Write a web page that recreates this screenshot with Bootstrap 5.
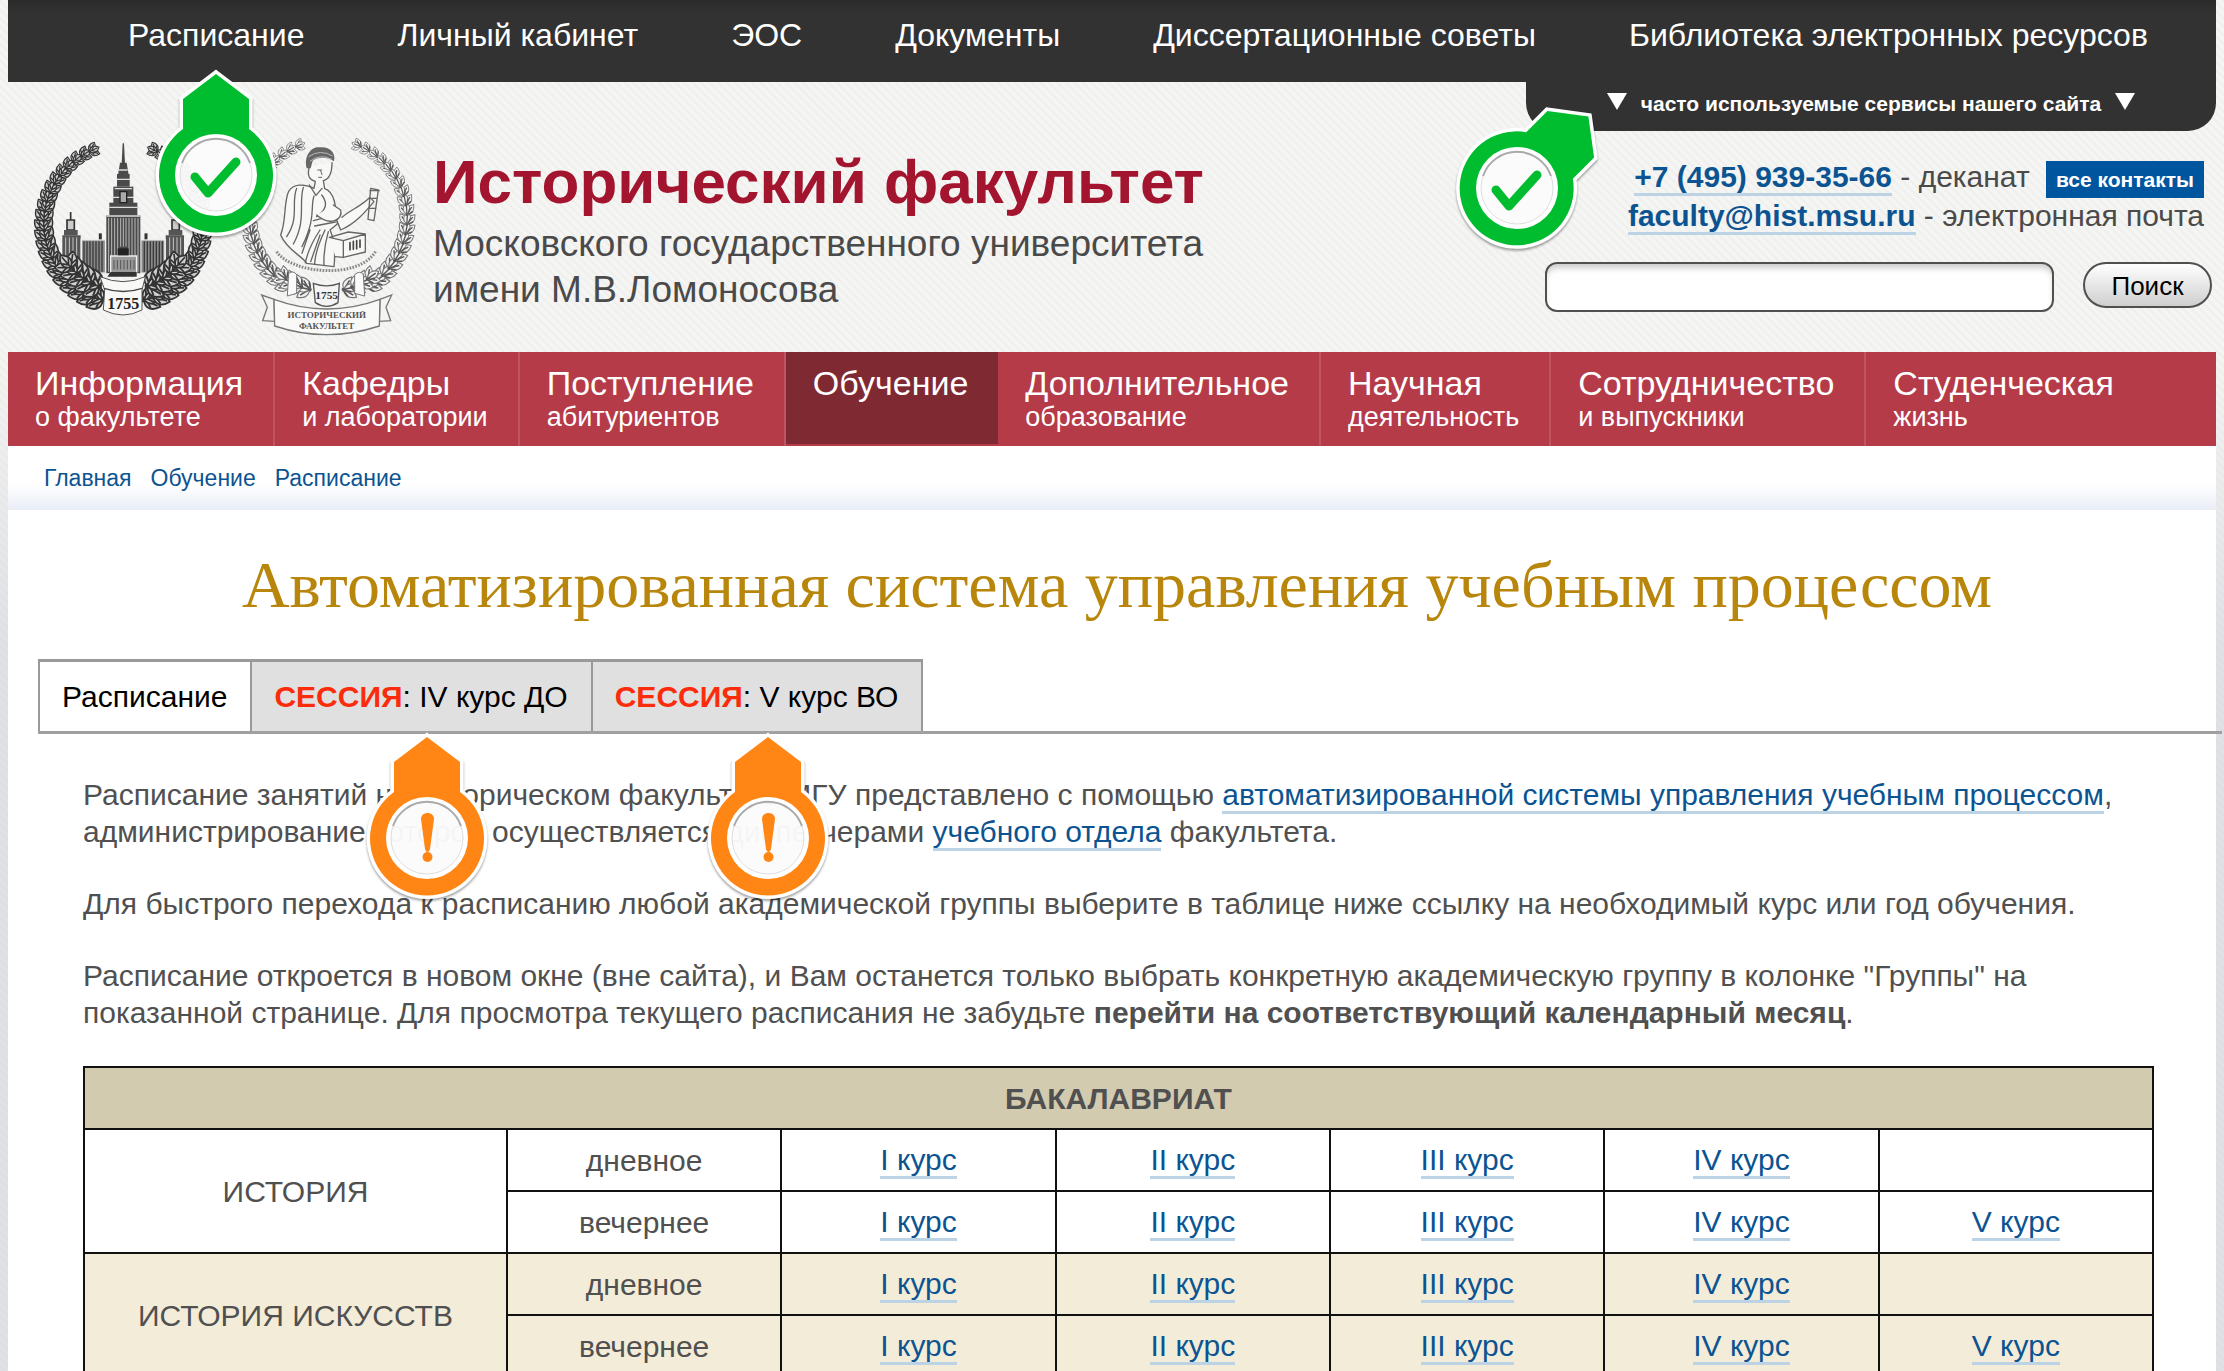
<!DOCTYPE html>
<html lang="ru">
<head>
<meta charset="utf-8">
<meta name="viewport" content="width=device-width, initial-scale=1">
<title>Исторический факультет МГУ — Расписание</title>
<link rel="stylesheet" href="https://cdn.jsdelivr.net/npm/bootstrap@5.3.0/dist/css/bootstrap.min.css">
<style>
  body { font-family: "Liberation Sans", Arial, sans-serif; font-size: 30px; line-height: 37px; color: #505050; overflow-x: hidden;
    background: linear-gradient(180deg, rgba(208,212,220,0) 350px, rgba(208,211,218,.6) 650px), repeating-linear-gradient(45deg, #eeeeec 0, #f5f5f3 2px, #f5f5f3 4px, #eeeeec 6px); }
  html { scrollbar-width: none; }
  a { color: #0c5491; text-decoration: none; }
  .sheet { margin: 0 8px; }
  .topbar { background: linear-gradient(#2b2b2b, #323232 12px); height: 82px; gap: 93px; padding: 10px 0 0 120px; }
  .topbar a { color: #fff; font-size: 32px; line-height: 50px; }
  .masthead { height: 270px; }
  .emblems { padding: 48px 0 0 24px; width: 425px; }
  .brand { padding-top: 70px; line-height: 46px; font-size: 37px; color: #4a4a4a; }
  .brand h1 { color: #a3142f; font-size: 62px; font-weight: 700; line-height: 60px; margin: 0 0 9px; }
  .aside-col { width: 690px; color: #4a4a4a; }
  .services { background: #323232; color: #fff; height: 49px; border-radius: 0 0 28px 28px; font-size: 21px; font-weight: 700; line-height: 43px; gap: 14px; }
  .services svg { width: 20px; height: 17px; fill: #fff; margin-top: 11px; }
  .contacts { padding: 26px 12px 0 0; line-height: 39px; }
  .wire { border-bottom: 3px solid #bcd3e6; }
  .contacts .wire { font-weight: 700; }
  .all-btn { background: #00559f; color: #fff; font-size: 21px; font-weight: 700; line-height: 37px; padding: 0 10px; border: 0; margin: -4px 0 -4px 8px; }
  .search { padding: 27px 4px 0 0; gap: 29px; }
  .search input { width: 509px; height: 50px; border: 2px solid #505050; border-radius: 12px; box-shadow: inset 0 6px 6px -2px #ccc; background: #fff; padding: 0 12px; font-size: 26px; }
  .search button { width: 129px; height: 46px; border: 2px solid #505050; border-radius: 23px; background: linear-gradient(#fff, #cfcfcf); font-size: 26px; line-height: 44px; padding: 0; color: #000; }
  .mainnav { background: #b53b49; height: 94px; }
  .mainnav a { color: #fff; font-size: 34px; line-height: 40px; padding: 11px 30px 0 27px; border-right: 2px solid #bf5563; }
  .mainnav a span { display: block; font-size: 27px; line-height: 28px; }
  .mainnav a.active { background: #7f2a33; border-color: #7f2a33; margin-bottom: 2px; padding-right: 28px; }
  .mainnav a:last-child { border: 0; }
  .crumbs { height: 64px; background: linear-gradient(#fff 60%, #e9edf6); padding: 14px 36px 0; font-size: 23px; gap: 19px; }
  .main-col { background: #fff; padding-bottom: 40px; }
  .main-col h2 { color: #b8860b; font-family: "Liberation Serif", serif; font-size: 66px; font-weight: 400; line-height: 70px; text-align: center; margin: 0; padding: 40px 0 0 10px; }
  .tabs { margin: 39px -6px 0 30px; border-bottom: 3px solid #a0a0a0; }
  .tabs a { border: solid #999; border-width: 3px 0 0 2px; background: #e0e0e0; color: #000; line-height: 69px; padding: 0 23px 0 22px; }
  .tabs a:last-child { border-right-width: 2px; }
  .tabs a.active { background: #fff; }
  .tabs b { color: #fb2c0b; }
  .copy { padding: 42px 62px 0 75px; }
  .copy p { margin: 0 0 35px; }
  .grid { width: 100%; table-layout: fixed; border-collapse: collapse; text-align: center; }
  .grid td, .grid th { border: 2px solid #111; height: 62px; padding: 0; vertical-align: middle; }
  .grid th { background: #d3cbaf; }
  .grid .lead-col { width: 423px; }
  .grid .tint td { background: #f3ecd9; }
  .grid td:has(a) { padding-bottom: 2px; }
  .pin { position: absolute; width: 130px; height: 180px; z-index: 5; overflow: visible; pointer-events: none; filter: drop-shadow(0 2px 1px rgba(0,0,0,.35)); }
  .pin-ok { color: #00bd2f; }
  .pin-warn { color: #ff8615; left: 110px; top: 61px; }
  .pin-nav { left: 23px; top: 50px; }
  .pin-head { left: -74px; top: -9px; }
</style>
<script src="https://cdn.jsdelivr.net/npm/bootstrap@5.3.0/dist/js/bootstrap.bundle.min.js"></script>
</head>
<body>
<svg width="0" height="0" class="position-absolute" aria-hidden="true">
  <defs>
    <g id="pinShape">
      <path fill-rule="evenodd" d="M65 14L98 39V69A57 57 0 1 1 32 69V39ZM65 76A39 39 0 1 0 65 154A39 39 0 1 0 65 76Z" fill="#fff" stroke="#fff" stroke-width="7"/>
      <path fill-rule="evenodd" d="M65 14L98 39V69A57 57 0 1 1 32 69V39ZM65 74A41 41 0 1 0 65 156A41 41 0 1 0 65 74Z" fill="currentColor"/>
      <circle cx="65" cy="115" r="37" fill="#fff" fill-opacity=".95"/>
    </g>
    <g id="pinRim"><circle cx="65" cy="115" r="36" fill="none" stroke="#ddd" stroke-width="1"/><path d="M31 103A36 36 0 0 1 99 103" fill="none" stroke="#aaa" stroke-width="2"/></g>
    <path id="tick" d="M44 117L57 133L85 102" fill="none" stroke="currentColor" stroke-width="9" stroke-linecap="round" stroke-linejoin="round"/>
    <g id="bang" fill="currentColor"><path d="M59 96C59 88 72 88 72 96L68 126C67 130 64 130 63 126Z"/><circle cx="65.500" cy="134" r="5"/></g>
    <g id="leaf"><path d="M0 0C-9-5-7-13 0-19C7-13 9-5 0 0Z" fill="#d0d0d0" stroke="#333" stroke-width="2"/><path d="M0 3V-16M0-4L5-10M0-4L-5-10" fill="none" stroke="#333" stroke-width="2"/></g>
    <g id="leafLight"><path d="M0 0C-8-5-6-13 0-19C6-13 8-5 0 0Z" fill="#f1f1f1" stroke="#777" stroke-width="1.500"/><path d="M0 3V-14M2-1L5-9" fill="none" stroke="#555" stroke-width="2"/></g>
    <g id="turret"><path d="M152 276V300" stroke="#333" stroke-width="5"/><path d="M141 300H163V330H141Z" fill="#ccc" stroke="#333" stroke-width="5"/><path d="M132 330H173V346H132Z" fill="#555"/><path d="M127 346H182V445L160 455L127 420Z" fill="#555"/><path d="M137 352V430M148 352V440M159 352V450M170 352V450" stroke="#c8c8c8" stroke-width="3"/><path d="M184 359H257V460H184Z" fill="#888" stroke="#eee" stroke-width="5"/><path d="M192 364V455M201 364V455M210 364V455M219 364V455M228 364V455M237 364V455M246 364V455" stroke="#3b3b3b" stroke-width="4"/><path d="M241 340V358" stroke="#333" stroke-width="9"/></g>
  </defs>
</svg>
<div class="sheet">
  <header>
    <nav class="topbar d-flex align-items-start text-nowrap">
      <a class="position-relative" href="#">Расписание
        <svg class="pin pin-ok pin-nav" viewBox="0 0 130 180" aria-hidden="true"><use href="#pinShape"/><use href="#pinRim"/><use href="#tick"/></svg></a>
      <a href="#">Личный кабинет</a><a href="#">ЭОС</a><a href="#">Документы</a><a href="#">Диссертационные советы</a><a href="#">Библиотека электронных ресурсов</a>
    </nav>
    <div class="masthead d-flex">
      <div class="emblems flex-shrink-0">
        <svg class="d-block" width="385" height="208" viewBox="36 30 1155 624" role="img" aria-label="Эмблемы МГУ и исторического факультета">
          <g id="wreathA"></g>
          <use href="#turret"/><use href="#turret" transform="translate(619 0) scale(-1 1)"/>
          <g fill="#4a4a4a">
            <path d="M308 70H312L315 130H305Z"/><path d="M300 128H320L326 165H294Z"/><path d="M291 162H329V200H291Z"/><path d="M280 200H340V250H280Z"/><path d="M268 248H352V288H268Z"/><path d="M259 286H361V460H259Z"/>
          </g>
          <path d="M297 150H323M289 178H331M284 206H336M278 232H300M320 232H342M268 262H352M260 288H360" stroke="#ddd" stroke-width="4"/>
          <path d="M266 294V455M275 294V455M284 294V455M293 294V455M327 294V455M336 294V455M345 294V455M354 294V455M302 294V380M310 294V380M318 294V380" stroke="#bbb" stroke-width="3"/>
          <path d="M300 215H320V248H300Z" fill="#aaa" stroke="#222" stroke-width="4"/>
          <path d="M272 408H350V465H272Z" fill="#999" stroke="#eee" stroke-width="4"/><path d="M293 385H326V406H293Z" fill="#222"/><path d="M282 420V448M292 420V448M302 420V448M312 420V448M322 420V448M332 420V448M342 420V448" stroke="#555" stroke-width="3"/><path d="M272 456H350V470H262Z" fill="#333"/>
          <g id="oakA"></g>
          <path d="M240 470Q310 500 376 470L366 510V570Q310 600 250 570L254 510Z" fill="#f8f8f7" stroke="#555" stroke-width="3"/><path d="M252 505Q310 524 366 505" fill="none" stroke="#444" stroke-width="4"/>
          <text x="310" y="567" text-anchor="middle" font-family="Liberation Serif, serif" font-weight="700" font-size="48" fill="#222">1755</text>

          <g id="wreathB"></g>
          <path d="M768 385Q800 470 890 486H950Q1040 470 1070 385L1050 440Q1010 500 920 505Q820 500 785 440Z" fill="#f5f5f4"/>
          <g fill="none" stroke="#666" stroke-width="4" stroke-linejoin="round" stroke-linecap="round">
            <path d="M868 140C860 170 870 180 886 184L882 205C850 190 820 192 806 214C790 250 800 300 782 345C800 390 850 410 860 430L942 440C946 400 944 360 930 330L952 312C948 260 944 215 914 206L910 182C932 176 936 150 936 128" fill="#f8f8f7"/>
            <path d="M868 195L888 226L906 205M830 205C812 250 840 290 800 350M850 202C835 250 860 300 820 372M882 228C870 262 890 290 846 380M905 225C925 250 918 270 890 290M880 302L950 284M884 318L946 306M900 330C880 360 862 400 856 428M915 330C896 370 885 400 884 432M925 335C915 370 910 400 912 436M870 330L846 400M900 345L872 425"/>
            <path d="M890 285C930 320 970 300 962 270L940 255M950 300L962 330C1010 310 1040 270 1062 245L1050 232C1020 262 990 270 966 292" fill="#f8f8f7"/>
            <path d="M1052 205L1075 210L1062 302L1044 298ZM1050 212H1078M1056 235H1070M1050 265H1066"/>
            <path d="M928 352L970 362V412L946 410M970 362L1036 342V396L970 412M928 352L985 336L1036 342" fill="#f8f8f7"/>
            <path d="M990 368V390M1000 364V388M1010 362V386M1020 360V382" stroke="#444" stroke-width="5"/>
            <path d="M893 150H905M902 152L906 164M896 172H905" stroke-width="3"/>
          </g>
          <path d="M860 145C850 100 880 78 900 82C930 80 948 98 942 124C920 108 890 112 878 122L872 145Z" fill="#666"/><path d="M866 110Q900 86 938 108M870 124Q898 100 936 118" fill="none" stroke="#bbb" stroke-width="3"/>
          <path d="M770 395C815 462 1020 480 1068 392" fill="none" stroke="#888" stroke-width="9" stroke-dasharray="5 4"/>
          <g id="oakB"></g>
          <path d="M806 460Q820 450 830 464V520L802 528ZM1004 464Q1020 450 1030 464L1034 528L1004 520Z" fill="#fafafa" stroke="#777" stroke-width="3"/>
          <path d="M880 490Q920 505 958 490L954 548Q920 570 886 548Z" fill="#f4f4f4" stroke="#555" stroke-width="4"/>
          <text x="920" y="538" text-anchor="middle" font-family="Liberation Serif, serif" font-weight="700" font-size="34" fill="#333">1755</text>
          <path d="M762 538L725 525L742 562L728 602L764 604ZM1080 538L1115 525L1098 562L1112 602L1078 604Z" fill="#f4f4f4" stroke="#777" stroke-width="4"/>
          <path d="M762 538Q920 596 1080 538L1078 618Q920 670 764 618Z" fill="#f9f9f8" stroke="#777" stroke-width="4"/>
          <text x="920" y="594" text-anchor="middle" font-family="Liberation Serif, serif" font-weight="700" font-size="27" fill="#555">ИСТОРИЧЕСКИЙ</text>
          <text x="920" y="626" text-anchor="middle" font-family="Liberation Serif, serif" font-weight="700" font-size="27" fill="#555">ФАКУЛЬТЕТ</text>
        </svg>
      </div>
      <div class="brand flex-grow-1 text-nowrap"><h1>Исторический факультет</h1>Московского государственного университета<br>имени М.В.Ломоносова</div>
      <div class="aside-col flex-shrink-0 position-relative">
        <div class="services d-flex justify-content-center"><svg viewBox="0 0 20 17" aria-hidden="true"><path d="M0 0H20L10 17Z"/></svg>часто используемые сервисы нашего сайта<svg viewBox="0 0 20 17" aria-hidden="true"><path d="M0 0H20L10 17Z"/></svg></div>
        <svg class="pin pin-ok pin-head" viewBox="0 0 130 180" aria-hidden="true"><use href="#pinShape" transform="rotate(45 65 115)"/><use href="#pinRim"/><use href="#tick"/></svg>
        <div class="contacts text-end text-nowrap">
          <div><a class="wire" href="#">+7 (495) 939-35-66</a> - деканат <button type="button" class="all-btn">все контакты</button></div>
          <div><a class="wire" href="#">faculty@hist.msu.ru</a> - электронная почта</div>
        </div>
        <form class="search d-flex justify-content-end"><input type="text" aria-label="Поиск по сайту"><button type="button">Поиск</button></form>
      </div>
    </div>
    <nav class="mainnav d-flex"><a href="#">Информация<span>о факультете</span></a><a href="#">Кафедры<span>и лаборатории</span></a><a href="#">Поступление<span>абитуриентов</span></a><a class="active" href="#">Обучение</a><a href="#">Дополнительное<span>образование</span></a><a href="#">Научная<span>деятельность</span></a><a href="#">Сотрудничество<span>и выпускники</span></a><a href="#">Студенческая<span>жизнь</span></a></nav>
    <nav class="crumbs d-flex" aria-label="Навигация"><a href="#">Главная</a><a href="#">Обучение</a><a href="#">Расписание</a></nav>
  </header>
  <main class="main-col">
    <h2>Автоматизированная система управления учебным процессом</h2>
    <nav class="tabs d-flex">
      <a class="active" href="#">Расписание</a>
      <a class="position-relative" href="#"><b>СЕССИЯ</b>: IV курс ДО<svg class="pin pin-warn" viewBox="0 0 130 180" aria-hidden="true"><use href="#pinShape"/><use href="#pinRim"/><use href="#bang"/></svg></a>
      <a class="position-relative" href="#"><b>СЕССИЯ</b>: V курс ВО<svg class="pin pin-warn" viewBox="0 0 130 180" aria-hidden="true"><use href="#pinShape"/><use href="#pinRim"/><use href="#bang"/></svg></a>
    </nav>
    <div class="copy">
      <p>Расписание занятий на историческом факультете МГУ представлено с помощью <a class="wire" href="#">автоматизированной системы управления учебным процессом</a>, администрирование которой осуществляется диспетчерами <a class="wire" href="#">учебного отдела</a> факультета.</p>
      <p>Для быстрого перехода к расписанию любой академической группы выберите в таблице ниже ссылку на необходимый курс или год обучения.</p>
      <p>Расписание откроется в новом окне (вне сайта), и Вам останется только выбрать конкретную академическую группу в колонке "Группы" на показанной странице. Для просмотра текущего расписания не забудьте <b>перейти на соответствующий календарный месяц</b>.</p>
      <table class="grid">
        <colgroup><col class="lead-col"><col span="6"></colgroup>
        <tbody>
          <tr><th colspan="7">БАКАЛАВРИАТ</th></tr>
          <tr><td rowspan="2">ИСТОРИЯ</td><td>дневное</td><td><a class="wire" href="#">I курс</a></td><td><a class="wire" href="#">II курс</a></td><td><a class="wire" href="#">III курс</a></td><td><a class="wire" href="#">IV курс</a></td><td></td></tr>
          <tr><td>вечернее</td><td><a class="wire" href="#">I курс</a></td><td><a class="wire" href="#">II курс</a></td><td><a class="wire" href="#">III курс</a></td><td><a class="wire" href="#">IV курс</a></td><td><a class="wire" href="#">V курс</a></td></tr>
          <tr class="tint"><td rowspan="2">ИСТОРИЯ ИСКУССТВ</td><td>дневное</td><td><a class="wire" href="#">I курс</a></td><td><a class="wire" href="#">II курс</a></td><td><a class="wire" href="#">III курс</a></td><td><a class="wire" href="#">IV курс</a></td><td></td></tr>
          <tr class="tint"><td>вечернее</td><td><a class="wire" href="#">I курс</a></td><td><a class="wire" href="#">II курс</a></td><td><a class="wire" href="#">III курс</a></td><td><a class="wire" href="#">IV курс</a></td><td><a class="wire" href="#">V курс</a></td></tr>
        </tbody>
      </table>
    </div>
  </main>
</div>
<script>
  // Lays leaves along both halves of a wreath, between two angles counted from its open top.
  function wreath(id, leaf, cx, cy, r, first, last, base, grow, splays) {
    let out = '';
    for (let a = last; a >= first; a -= 7) {
      for (const side of [-1, 1]) {
        const t = a * Math.PI / 180, x = cx + side * r * Math.sin(t), y = cy - r * Math.cos(t);
        const size = base + grow * a / 165;
        for (const splay of splays) {
          out += `<use href="#${leaf}" transform="translate(${x.toFixed(1)} ${y.toFixed(1)}) rotate(${(a - 90) * side + splay}) scale(${size.toFixed(2)})"/>`;
        }
      }
    }
    document.getElementById(id).innerHTML = out;
  }
  wreath('wreathA', 'leaf', 310, 310, 238, 19, 165, 1.4, 1.4, [-38, 38, 0]);
  wreath('oakA', 'leaf', 310, 300, 212, 126, 160, 0.6, 2.4, [-50, 50, 0]);
  wreath('wreathB', 'leafLight', 925, 295, 236, 22, 150, 1.3, 1.1, [-38, 38, 0]);
  wreath('oakB', 'leafLight', 920, 300, 215, 142, 166, 0.5, 1.8, [-45, 45, 0]);
</script>
</body>
</html>
